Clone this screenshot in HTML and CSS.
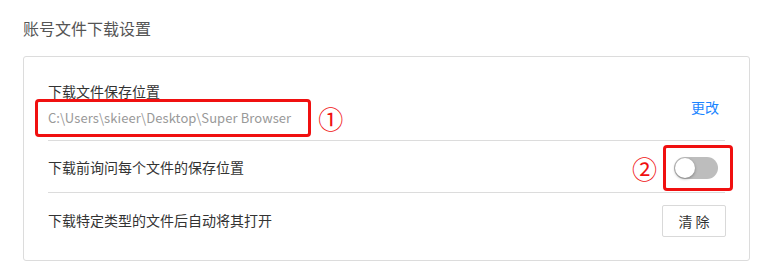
FILE: index.html
```html
<!DOCTYPE html>
<html lang="zh-CN">
<head>
<meta charset="utf-8">
<title>账号文件下载设置</title>
<link rel="stylesheet" href="styles.css">
</head>
<body>
<h2 class="title">账号文件下载设置</h2>
<section class="card">
  <div class="row row-path">
    <div class="info">
      <div class="label">下载文件保存位置</div>
      <div class="path-line">
        <span class="path">C:\Users\skieer\Desktop\Super Browser<span class="mark mark-path"></span></span>
        <span class="num num-1">①</span>
      </div>
    </div>
    <a class="link" href="#">更改</a>
  </div>
  <div class="row row-ask">
    <div class="label">下载前询问每个文件的保存位置</div>
    <div class="ctrl">
      <span class="num num-2">②</span>
      <span class="toggle"><span class="knob"></span><span class="mark mark-toggle"></span></span>
    </div>
  </div>
  <div class="row row-open">
    <div class="label">下载特定类型的文件后自动将其打开</div>
    <button class="btn" type="button">清 除</button>
  </div>
</section>
</body>
</html>
```
FILE: styles.css
```css
* { box-sizing: border-box; }
html, body { margin: 0; padding: 0; background: #fff; }
body {
  font-family: "Noto Sans CJK SC", "Noto Sans", sans-serif;
  color: #333;
  width: 773px;
  height: 277px;
  overflow: hidden;
}
.title {
  margin: 16px 0 0 23px;
  font-size: 16px;
  line-height: 24px;
  font-weight: normal;
  color: #555;
}
.card {
  margin: 16px 23px 0 23px;
  border: 1px solid #dcdcdc;
  border-radius: 3px;
  padding: 0 24px;
  height: 205px;
}
.row {
  display: flex;
  justify-content: space-between;
  align-items: center;
  border-bottom: 1px solid #dcdcdc;
}
.row:last-child { border-bottom: none; }
.label {
  font-size: 14px;
  line-height: 20px;
  color: #333;
}
.row-path {
  height: 84px;
  padding-top: 24px;
  align-items: flex-start;
}
.path-line {
  display: flex;
  align-items: center;
  margin-top: 7px;
  height: 20px;
}
.path {
  position: relative;
  font-size: 13px;
  line-height: 20px;
  letter-spacing: 0.08px;
  color: #999;
}
.mark {
  position: absolute;
  border: 3px solid #f01010;
  border-radius: 4px;
}
.mark-path {
  left: -13px;
  right: -20px;
  top: -9px;
  bottom: -9px;
}
.num {
  color: #f01010;
  font-size: 25px;
  line-height: 20px;
}
.num-1 { margin-left: 27px; }
.link {
  margin-top: 16px;
  margin-right: 6px;
  font-size: 14px;
  line-height: 20px;
  color: #1a85ff;
  text-decoration: none;
}
.row-ask {
  height: 52px;
}
.ctrl {
  display: flex;
  align-items: center;
  margin-right: 7px;
  margin-top: 2px;
}
.num-2 { margin-right: 17px; }
.toggle {
  position: relative;
  display: block;
  width: 44px;
  height: 22px;
  border-radius: 11px;
  background: #bdbdbd;
}
.knob {
  position: absolute;
  left: 1px;
  top: 1px;
  width: 20px;
  height: 20px;
  border-radius: 50%;
  background: #fff;
  box-shadow: 0 1px 3px rgba(0,0,0,0.35);
}
.mark-toggle {
  left: -11px;
  right: -15px;
  top: -12px;
  bottom: -12px;
}
.row-open {
  height: 67px;
  align-items: flex-start;
  padding-top: 12px;
}
.row-open .label { margin-top: 5px; }
.btn {
  width: 64px;
  height: 32px;
  background: #fff;
  border: 1px solid #d9d9d9;
  border-radius: 2px;
  font-family: "Noto Sans CJK SC", sans-serif;
  font-size: 14px;
  color: #333;
  padding: 0;
  margin-right: -1px;
}
```
